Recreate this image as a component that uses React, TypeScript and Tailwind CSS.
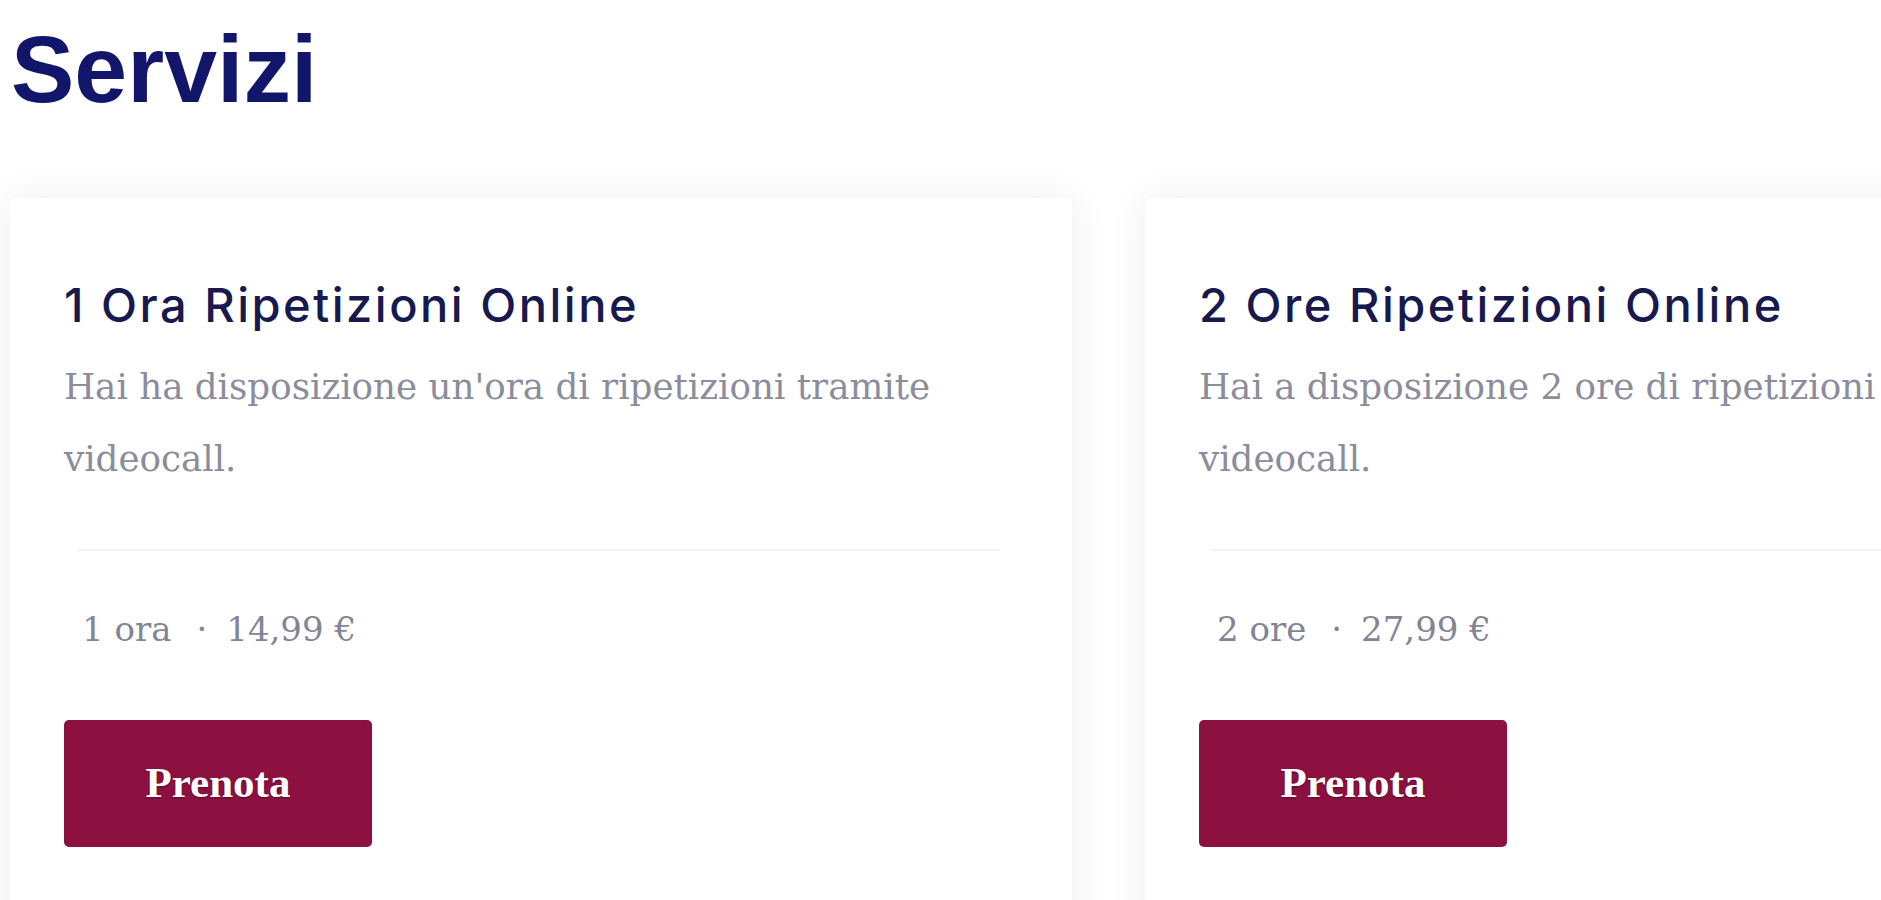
import React from "react";

type Service = { title: string; desc: string; qty: string; price: string };

const services: Service[] = [
  {
    title: "1 Ora Ripetizioni Online",
    desc: "Hai ha disposizione un'ora di ripetizioni tramite videocall.",
    qty: "1 ora",
    price: "14,99 €",
  },
  {
    title: "2 Ore Ripetizioni Online",
    desc: "Hai a disposizione 2 ore di ripetizioni tramite videocall.",
    qty: "2 ore",
    price: "27,99 €",
  },
];

function Card({ s }: { s: Service }) {
  return (
    <div className="w-[1062px] h-[780px] shrink-0 bg-white rounded-[6px] shadow-[0_0_40px_rgba(0,0,0,0.07)] px-[54px] pt-[79px]">
      <h2 className="text-[47px] leading-[56px] font-medium text-[#181a4f] font-['Inter',sans-serif] tracking-[2.5px]">
        {s.title}
      </h2>
      <p className="mt-[18px] w-[900px] text-[35.7px] leading-[72px] text-[#8b8c9c] font-['DejaVu_Serif',serif]">
        {s.desc}
      </p>
      <div className="mt-[54px] ml-[13px] mr-[18px] h-[2px] bg-[#f2f2f4]" />
      <div className="mt-[53px] pl-[18px] text-[34px] leading-[50px] text-[#838596] font-['DejaVu_Serif',serif] whitespace-nowrap">
        <span>{s.qty}</span>
        <span className="ml-[25px]">·</span>
        <span className="ml-[19px]">{s.price}</span>
      </div>
      <button className="mt-[66px] w-[308px] h-[127px] rounded-[5px] bg-[#8c1140] text-white text-[43px] font-bold font-['Liberation_Serif',serif] [text-shadow:0_1px_2px_rgba(0,0,0,0.4)]">
        Prenota
      </button>
    </div>
  );
}

export default function App() {
  return (
    <div className="w-[1881px] h-[900px] overflow-hidden bg-white">
      <h1 className="pl-[11px] pt-[22px] text-[95px] leading-[95px] font-bold text-[#12166b] font-['Liberation_Sans',sans-serif]">
        Servizi
      </h1>
      <div className="mt-[81px] flex gap-[73px] pl-[10px]">
        {services.map((s) => (
          <Card key={s.title} s={s} />
        ))}
      </div>
    </div>
  );
}
